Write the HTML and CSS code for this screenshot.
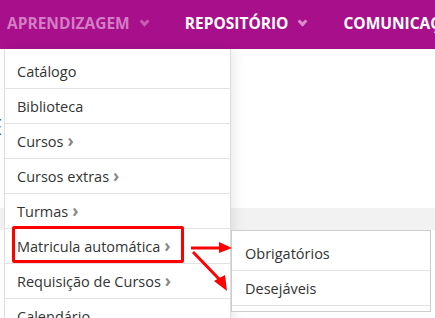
FILE: index.html
```html
<!DOCTYPE html>
<html lang="pt-BR">
<head>
	<meta charset="UTF-8">
	<title>Menu</title>
	<link rel="stylesheet" href="styles.css">
</head>
<body>
	<header class="topbar">
		<nav class="nav">
			<a class="nav-item faded">APRENDIZAGEM <span class="caret"></span></a>
			<a class="nav-item">REPOSITÓRIO <span class="caret"></span></a>
			<a class="nav-item">COMUNICAÇÃO</a>
		</nav>
	</header>

	<main class="page">
		<h1 class="page-title">E</h1>
		<div class="band"></div>
	</main>

	<ul class="dropdown">
		<li>Catálogo</li>
		<li>Biblioteca</li>
		<li>Cursos <span class="more">›</span></li>
		<li>Cursos extras <span class="more">›</span></li>
		<li>Turmas <span class="more">›</span></li>
		<li>Matricula automática <span class="more">›</span></li>
		<li>Requisição de Cursos <span class="more">›</span></li>
		<li>Calendário</li>
	</ul>

	<ul class="submenu">
		<li>Obrigatórios</li>
		<li>Desejáveis</li>
	</ul>

	<div class="highlight"></div>
	<svg class="arrows" width="60" height="60" viewBox="0 0 60 60">
		<path d="M2 7 L32 7" stroke="#f00" stroke-width="3" fill="none"/>
		<polygon points="30,1 43,7 30,12" fill="#f00"/>
		<path d="M4 11 L31 39" stroke="#f00" stroke-width="3" fill="none"/>
		<polygon points="25,40 36,34 38,50" fill="#f00"/>
	</svg>
</body>
</html>
```

FILE: styles.css
```css
*{
	margin: 0;
	padding: 0;
	box-sizing: border-box;
}
html,body{
	height: 100%;
}
body{
	overflow: hidden;
	background-color: #fff;
	font-family: "Open Sans", "Noto Sans", sans-serif;
	color: #333;
}
ul{list-style: none;}

.topbar{
	height: 49px;
	background-color: #a8108b;
}
.nav{
	display: flex;
	align-items: center;
	height: 100%;
	padding-left: 7px;
	padding-bottom: 4px;
	gap: 37px;
	white-space: nowrap;
}
.nav-item{
	display: flex;
	align-items: center;
	gap: 9px;
	font-size: 15.5px;
	font-weight: 700;
	color: #fff;
}
.nav-item.faded{
	color: #d37dc5;
}
.caret{
	width: 7px;
	height: 7px;
	border-right: 3px solid #d98bcb;
	border-bottom: 3px solid #d98bcb;
	transform: rotate(45deg);
	margin-top: -3px;
	margin-left: 2px;
}
.faded .caret{
	border-color: #c65db5;
}

.page{
	padding-top: 65px;
}
.page-title{
	font-size: 22px;
	font-weight: 400;
	color: #555;
	margin-left: -10px;
	line-height: 24px;
}
.band{
	margin-top: 70px;
	height: 22px;
	background-color: #f2f2f2;
}

.dropdown{
	position: absolute;
	left: 4px;
	top: 49px;
	width: 227px;
	padding-top: 5px;
	background-color: #fff;
	border-left: 1px solid #ddd;
	border-right: 1px solid #ddd;
	box-shadow: 4px 0 10px rgba(0,0,0,.08);
}
.dropdown li,
.submenu li{
	height: 35px;
	padding-left: 12px;
	display: flex;
	align-items: center;
	font-size: 14.5px;
	border-bottom: 1px solid #e2e2e2;
	white-space: nowrap;
}
.more{
	color: #888;
	font-size: 17px;
	font-weight: 700;
	margin-left: 4px;
	margin-top: -2px;
}

.submenu{
	position: absolute;
	left: 231px;
	top: 230px;
	width: 200px;
	padding: 5px 0 5px;
	background-color: #fff;
	border: 1px solid #ccc;
}
.submenu li{
	padding-left: 13px;
}

.highlight{
	position: absolute;
	left: 12px;
	top: 226px;
	width: 172px;
	height: 37px;
	border: 3px solid #f00;
	border-radius: 2px;
}
.arrows{
	position: absolute;
	left: 189px;
	top: 241px;
}
```
